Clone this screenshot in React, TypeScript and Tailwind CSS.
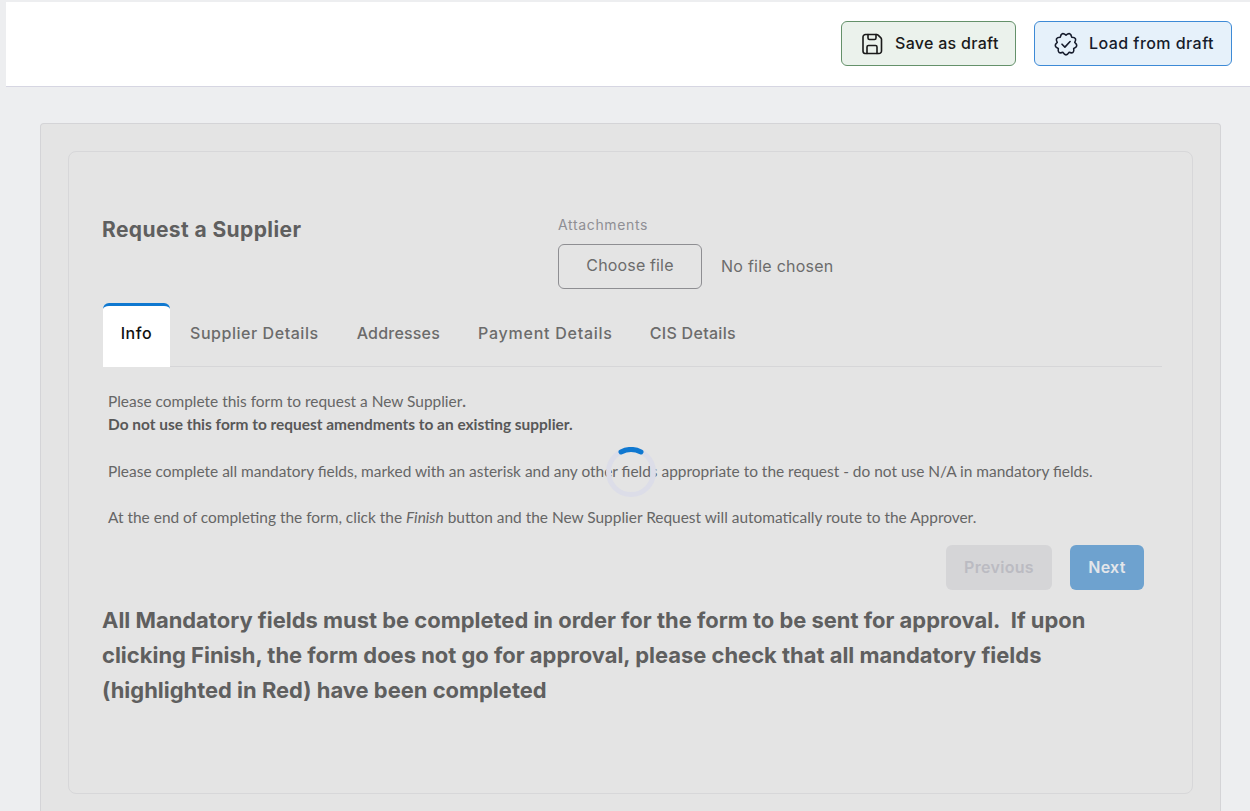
const tabs = [
  { label: "Supplier Details", cls: "tracking-[0.55px]" },
  { label: "Addresses", cls: "tracking-[0.2px]" },
  { label: "Payment Details", cls: "tracking-[0.75px]" },
  { label: "CIS Details", cls: "tracking-[0.3px] -ml-px" },
];

// scalloped badge outline: valleys on an inner circle, lobes pulled out by a control point
const badgePath = (() => {
  const n = 9;
  let d = "";
  for (let i = 0; i < n; i++) {
    const a = (i / n) * Math.PI * 2 - Math.PI / 2;
    const b = ((i + 0.5) / n) * Math.PI * 2 - Math.PI / 2;
    const c = ((i + 1) / n) * Math.PI * 2 - Math.PI / 2;
    if (i === 0) d += `M${(12 + 8.9 * Math.cos(a)).toFixed(2)} ${(12 + 8.9 * Math.sin(a)).toFixed(2)}`;
    d += `Q${(12 + 13.4 * Math.cos(b)).toFixed(2)} ${(12 + 13.4 * Math.sin(b)).toFixed(2)} ${(12 + 8.9 * Math.cos(c)).toFixed(2)} ${(12 + 8.9 * Math.sin(c)).toFixed(2)}`;
  }
  return d + "Z";
})();

const SaveIcon = () => (
  <svg width="24" height="24" viewBox="0 0 24 24" fill="none" stroke="currentColor" strokeWidth="1.6" strokeLinecap="round" strokeLinejoin="round">
    <path d="M5.5 2.5h11.2c.5 0 1 .2 1.4.6l2.8 2.8c.4.4.6.9.6 1.4v11.7a2.5 2.5 0 0 1-2.5 2.5h-14A2.5 2.5 0 0 1 3 19v-14A2.5 2.5 0 0 1 5.5 2.5z" />
    <path d="M7 21.5V15a1.5 1.5 0 0 1 1.5-1.5h7A1.5 1.5 0 0 1 17 15v6.5" />
    <path d="M8 2.5V6a1.5 1.5 0 0 0 1.5 1.5h5A1.5 1.5 0 0 0 16 6V2.5" />
  </svg>
);

const LoadIcon = () => (
  <svg width="24" height="24" viewBox="0 0 24 24" fill="none" stroke="currentColor" strokeWidth="1.6" strokeLinecap="round" strokeLinejoin="round">
    <path d={badgePath} />
    <path d="M8 12.2l2.9 2.9 5.2-5.6" />
  </svg>
);

const Spinner = () => (
  <svg className="absolute left-[537px] top-[295px]" width="50" height="50" viewBox="0 0 50 50" fill="none">
    <circle cx="25" cy="25" r="22.5" stroke="#dcdde8" strokeWidth="5" />
    <path d="M15 4.9 A22.5 22.5 0 0 1 35 4.9" stroke="#0f78d0" strokeWidth="5" strokeLinecap="round" />
  </svg>
);

export default function App() {
  return (
    <div className="h-[811px] overflow-hidden bg-[#edeef0] pl-[6px] pt-[2px] font-['Inter',sans-serif]">
      <header className="flex h-[85px] items-start justify-end gap-[18px] border-b border-[#d6d6e2] bg-white pr-[18px] pt-[19px]">
        <button className="flex h-[45px] w-[175px] items-center gap-[11px] rounded-md border border-[#64916a] bg-[#ebf2ec] pl-[18px] text-[16px] font-medium tracking-[0.3px] text-[#1a1a1a]">
          <SaveIcon />
          <span className="-mt-[2px]">Save as draft</span>
        </button>
        <button className="flex h-[45px] w-[198px] items-center gap-[11px] rounded-md border border-[#3d8ad6] bg-[#e6f1fa] pl-[19px] text-[16px] font-medium tracking-[0.45px] text-[#161c2c]">
          <LoadIcon />
          <span className="-mt-[2px]">Load from draft</span>
        </button>
      </header>

      <main className="ml-[34px] mr-[29px] mt-[36px] rounded-t border border-b-0 border-[#d4d4d7] bg-[#e4e4e4] p-[27px]">
        <section className="relative h-[643px] rounded-lg border border-[#d7d7d9] pl-[34px] pr-[30px] pt-[57px]">
          <div className="flex h-[94px] items-start">
            <h1 className="-ml-px w-[456px] pt-[6px] text-[21px] font-bold leading-[30px] tracking-[0.4px] text-[#5f5f5f]">
              Request a Supplier
            </h1>
            <div className="pt-[7px]">
              <div className="text-[14px] leading-[18px] tracking-[0.65px] text-[#8f8f94]">Attachments</div>
              <div className="mt-[10px] flex items-center gap-[19px]">
                <button className="h-[45px] w-[144px] rounded-md border border-[#8e8e92] pb-[4px] text-[16px] tracking-[0.15px] text-[#6c6c6c]">
                  Choose file
                </button>
                <span className="-mt-[2px] text-[16px] tracking-[0.25px] text-[#6c6c6c]">No file chosen</span>
              </div>
            </div>
          </div>

          <nav className="flex h-[64px] items-stretch border-b border-[#d6d6d8]">
            <div className="-mb-px flex w-[67px] items-center justify-center rounded-t-md border-t-[3px] border-[#0f78d0] bg-white pb-[8px] text-[16px] font-medium tracking-[0.6px] text-[#111]">
              Info
            </div>
            <div className="ml-[20px] flex items-center gap-[38px] pb-[4px] text-[16px] font-medium text-[#6b6b6b]">
              {tabs.map((t) => (
                <span key={t.label} className={t.cls}>
                  {t.label}
                </span>
              ))}
            </div>
          </nav>

          <div className="pl-[5px] pt-[23px] font-['Lato',sans-serif] text-[15.45px] leading-[23.3px] text-[#666]">
            <p>Please complete this form to request a New Supplier<b>.</b></p>
            <p className="font-bold text-[#585858]">Do not use this form to request amendments to an existing supplier.</p>
            <p className="mt-[23.3px]">
              Please complete all mandatory fields, marked with an asterisk and any other fields appropriate to the request - do not use N/A in mandatory fields.
            </p>
            <p className="mt-[23.3px]">
              At the end of completing the form, click the <i>Finish</i> button and the New Supplier Request will automatically route to the Approver.
            </p>
          </div>

          <div className="mr-[18px] mt-[15px] flex justify-end gap-[18px]">
            <button className="h-[45px] w-[106px] rounded-md bg-[#d5d5d7] text-[16px] font-semibold tracking-[0.3px] text-[#bbbbc2]">
              Previous
            </button>
            <button className="h-[45px] w-[74px] rounded-md bg-[#6ea2cf] text-[16px] font-semibold tracking-[0.3px] text-[#e3e6ea]">
              Next
            </button>
          </div>

          <p className="-ml-px mt-[13px] text-[21.95px] font-bold leading-[35px] text-[#5f5f5f]">
            All Mandatory fields must be completed in order for the form to be sent for approval.&nbsp; If upon
            <br />
            clicking Finish, the form does not go for approval, please check that all mandatory fields
            <br />
            (highlighted in Red) have been completed
          </p>

          <Spinner />
        </section>
      </main>
    </div>
  );
}
